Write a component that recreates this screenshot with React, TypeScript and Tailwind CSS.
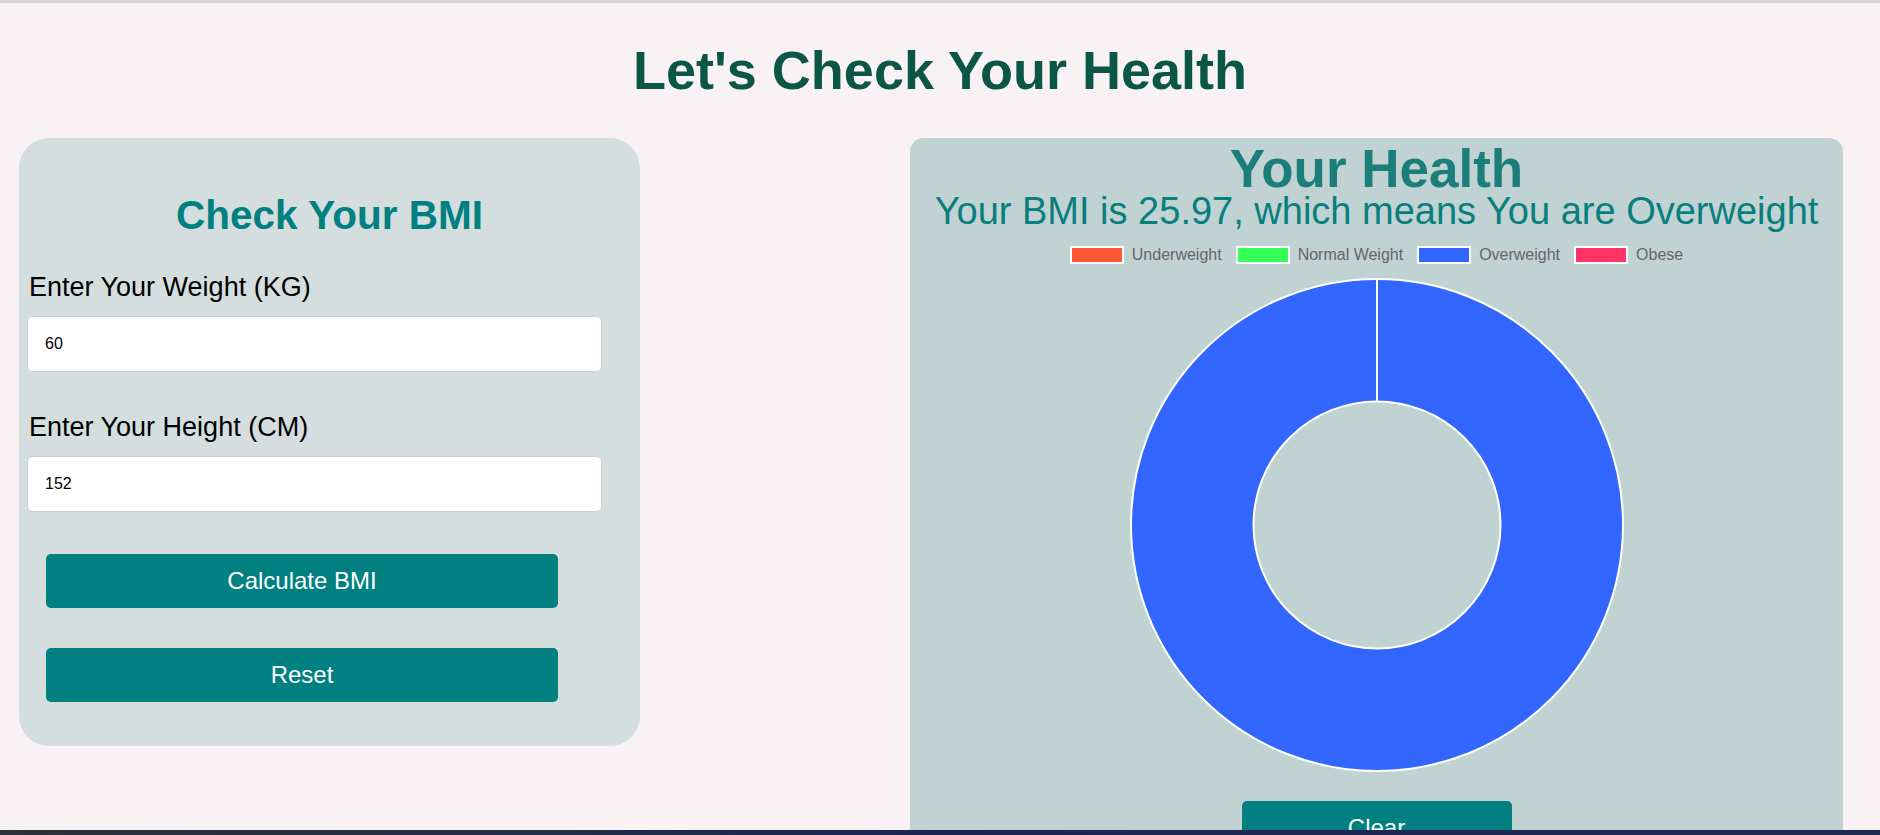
import { useState } from 'react'

const legend = [
  { label: 'Underweight', color: 'bg-[#ff5733]' },
  { label: 'Normal Weight', color: 'bg-[#33ff57]' },
  { label: 'Overweight', color: 'bg-[#3366ff]' },
  { label: 'Obese', color: 'bg-[#ff3366]' },
]

function Donut() {
  // single full segment (Overweight), chart.js style with white borders
  return (
    <svg width="496" height="496" viewBox="0 0 496 496" className="mx-auto mt-[13px] block">
      <circle cx="248" cy="248" r="246" fill="#3366ff" stroke="#ffffff" strokeWidth="2" />
      <circle cx="248" cy="248" r="123.5" fill="#c1d2d2" stroke="#ffffff" strokeWidth="2" />
      <line x1="248" y1="2" x2="248" y2="124.5" stroke="#ffffff" strokeWidth="2" />
    </svg>
  )
}

export default function App() {
  const [weight, setWeight] = useState('60')
  const [height, setHeight] = useState('152')

  return (
    <div className="min-h-screen border-t-[3px] border-[#d3d3d3] bg-[#f8f2f4] font-['Liberation_Sans',Arial,sans-serif]">
      <h1 className="mt-[37px] text-center text-[54px] leading-[61px] font-bold text-[#0b5647]">
        Let's Check Your Health
      </h1>

      <div className="mt-[37px] flex items-start justify-between pl-[19px] pr-[37px]">
        {/* BMI form */}
        <div className="w-[621px] rounded-[30px] bg-[#d4dedf] px-2 pt-[54px] pb-[44px]">
          <h2 className="text-center text-[40.5px] leading-[46px] font-bold text-[#008080]">Check Your BMI</h2>

          <label className="mt-[34px] block pl-[2px] text-[27px] leading-[30.5px] text-black">Enter Your Weight (KG)</label>
          <input
            type="number"
            value={weight}
            onChange={(e) => setWeight(e.target.value)}
            className="mt-[13.5px] block h-[56px] w-[575px] rounded-[5px] border border-[#cccccc] bg-white pl-[17px] text-[16px] text-black outline-none"
          />

          <label className="mt-[39.5px] block pl-[2px] text-[27px] leading-[30.5px] text-black">Enter Your Height (CM)</label>
          <input
            type="number"
            value={height}
            onChange={(e) => setHeight(e.target.value)}
            className="mt-[14px] block h-[56px] w-[575px] rounded-[5px] border border-[#cccccc] bg-white pl-[17px] text-[16px] text-black outline-none"
          />

          <button className="mt-[42px] ml-[19px] block h-[54px] w-[512px] rounded-[5px] bg-[#008080] text-[24px] text-white">
            Calculate BMI
          </button>
          <button className="mt-[40px] ml-[19px] block h-[54px] w-[512px] rounded-[5px] bg-[#008080] text-[24px] text-white">
            Reset
          </button>
        </div>

        {/* Result */}
        <div className="w-[933px] rounded-[14px] bg-[#c1d2d2] pt-[6px] pb-[40px]">
          <h2 className="text-center text-[53px] leading-[50px] font-bold text-[#1b7e7b]">Your Health</h2>
          <p className="text-center text-[38px] leading-[34px] text-[#087f7f]">
            Your BMI is 25.97, which means You are Overweight
          </p>

          <div className="mt-[18px] flex items-center justify-center gap-[14px]">
            {legend.map((item) => (
              <div key={item.label} className="flex items-center gap-[8px]">
                <span className={`block h-[18px] w-[54px] border-2 border-white ${item.color}`} />
                <span className="text-[16px] leading-[18px] text-[#666666]">{item.label}</span>
              </div>
            ))}
          </div>

          <Donut />

          <button className="mx-auto mt-[28px] block h-[54px] w-[270px] rounded-[5px] bg-[#008080] text-[24px] text-white">
            Clear
          </button>
        </div>
      </div>

      {/* taskbar edge at the bottom of the screen */}
      <div className="fixed inset-x-0 bottom-0 h-[5px] bg-gradient-to-r from-[#2d3138] via-[#1b2552] to-[#1d2a4f]" />
    </div>
  )
}
